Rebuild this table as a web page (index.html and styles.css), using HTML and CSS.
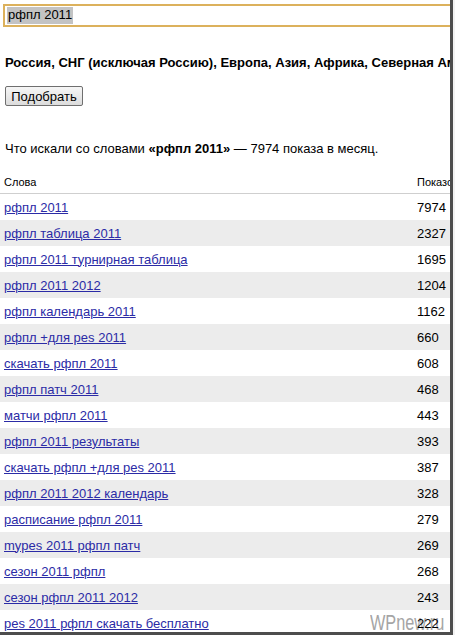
FILE: index.html
```html
<!DOCTYPE html>
<html lang="ru">
<head>
<meta charset="utf-8">
<link rel="stylesheet" href="styles.css">
</head>
<body>
<div class="frame">
  <div class="search"><span class="sel">рфпл 2011</span></div>
  <p class="regions">Россия, СНГ (исключая Россию), Европа, Азия, Африка, Северная Америка, Южная Америка</p>
  <button class="btn" type="button">Подобрать</button>
  <p class="summary">Что искали со словами <b>«рфпл 2011»</b> — 7974 показа в месяц.</p>
  <table class="words">
    <thead>
      <tr><th class="w">Слова</th><th class="n">Показов</th></tr>
    </thead>
    <tbody>
      <tr><td class="w"><a href="#">рфпл 2011</a></td><td class="n">7974</td></tr>
      <tr><td class="w"><a href="#">рфпл таблица 2011</a></td><td class="n">2327</td></tr>
      <tr><td class="w"><a href="#">рфпл 2011 турнирная таблица</a></td><td class="n">1695</td></tr>
      <tr><td class="w"><a href="#">рфпл 2011 2012</a></td><td class="n">1204</td></tr>
      <tr><td class="w"><a href="#">рфпл календарь 2011</a></td><td class="n">1162</td></tr>
      <tr><td class="w"><a href="#">рфпл +для pes 2011</a></td><td class="n">660</td></tr>
      <tr><td class="w"><a href="#">скачать рфпл 2011</a></td><td class="n">608</td></tr>
      <tr><td class="w"><a href="#">рфпл патч 2011</a></td><td class="n">468</td></tr>
      <tr><td class="w"><a href="#">матчи рфпл 2011</a></td><td class="n">443</td></tr>
      <tr><td class="w"><a href="#">рфпл 2011 результаты</a></td><td class="n">393</td></tr>
      <tr><td class="w"><a href="#">скачать рфпл +для pes 2011</a></td><td class="n">387</td></tr>
      <tr><td class="w"><a href="#">рфпл 2011 2012 календарь</a></td><td class="n">328</td></tr>
      <tr><td class="w"><a href="#">расписание рфпл 2011</a></td><td class="n">279</td></tr>
      <tr><td class="w"><a href="#">mypes 2011 рфпл патч</a></td><td class="n">269</td></tr>
      <tr><td class="w"><a href="#">сезон 2011 рфпл</a></td><td class="n">268</td></tr>
      <tr><td class="w"><a href="#">сезон рфпл 2011 2012</a></td><td class="n">243</td></tr>
      <tr><td class="w"><a href="#">pes 2011 рфпл скачать бесплатно</a></td><td class="n">222</td></tr>
    </tbody>
  </table>
  <div class="watermark">WPnew.ru</div>
</div>
</body>
</html>
```

FILE: styles.css
```css
html, body {
  margin: 0;
  padding: 0;
  background: #f2f2f2;
}
body {
  font-family: "Liberation Sans", Arial, sans-serif;
  font-size: 13px;
  color: #000;
}
.frame {
  position: relative;
  width: 450px;
  height: 632px;
  overflow: hidden;
  background: #fff;
  border-right: 3px solid #4d4d4d;
  border-bottom: 3px solid #4d4d4d;
}
.search {
  box-sizing: border-box;
  margin: 4px 0 0 3px;
  width: 520px;
  height: 23px;
  border: 2px solid #dcb15c;
  display: flex;
  align-items: center;
  padding-left: 2px;
  font-size: 13px;
}
.sel {
  background: #c3c3c3;
  padding: 1px 1px 2px 1px;
  line-height: 14px;
}
.regions {
  margin: 0;
  padding: 28px 0 0 5px;
  font-weight: bold;
  white-space: nowrap;
  line-height: 15px;
}
.btn {
  display: block;
  margin: 16px 0 0 5px;
  box-sizing: border-box;
  width: 78px;
  height: 20px;
  padding: 0;
  font-family: "Liberation Sans", Arial, sans-serif;
  font-size: 13px;
  color: #000;
  border: 1px solid #6f6f6f;
  border-radius: 2px;
  background: linear-gradient(#f6f6f6, #dcdcdc);
}
.summary {
  margin: 0;
  padding: 35px 0 0 5px;
  line-height: 15px;
}
.words {
  margin-top: 16px;
  width: 450px;
  border-collapse: collapse;
  table-layout: fixed;
}
.words th {
  font-weight: normal;
  font-size: 11px;
  text-align: left;
  height: 19px;
  padding: 0 0 2px 0;
  border-bottom: 1px solid #cfcfcf;
  white-space: nowrap;
  overflow: hidden;
}
.words th.w { padding-left: 4px; }
.words th.n { width: 33px; }
.words td {
  height: 26px;
  padding: 0;
}
.words td.w { padding-left: 4px; }
.words td.n {
  position: relative;
  z-index: 1;
  font-size: 13px;
}
.words tbody tr:nth-child(even) td {
  background: #ececec;
}
.words a {
  color: #2b2ba6;
  text-decoration: underline;
}
.watermark {
  position: absolute;
  left: 370px;
  top: 612px;
  font-size: 22px;
  line-height: 22px;
  color: #a5a5a5;
  transform: scaleX(0.74);
  transform-origin: left top;
  white-space: nowrap;
}
```
